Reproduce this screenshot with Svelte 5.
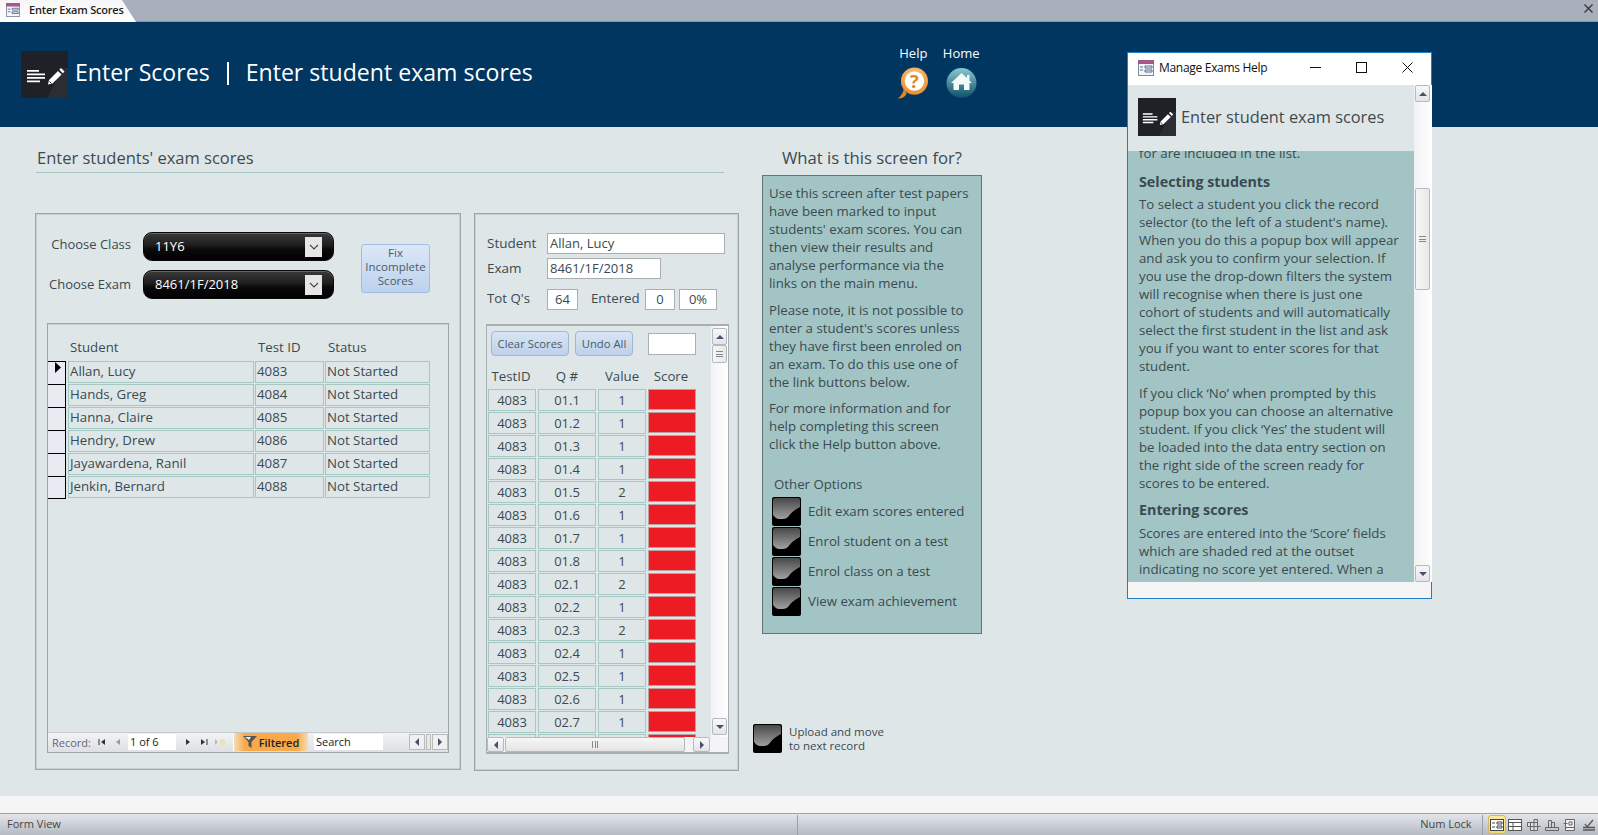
<script>
  const students = [
    ['Allan, Lucy', 4083], ['Hands, Greg', 4084], ['Hanna, Claire', 4085],
    ['Hendry, Drew', 4086], ['Jayawardena, Ranil', 4087], ['Jenkin, Bernard', 4088]
  ];
  const qs = [
    ['01.1',1],['01.2',1],['01.3',1],['01.4',1],['01.5',2],['01.6',1],['01.7',1],['01.8',1],
    ['02.1',2],['02.2',1],['02.3',2],['02.4',1],['02.5',1],['02.6',1],['02.7',1]
  ];
  const options = ['Edit exam scores entered','Enrol student on a test','Enrol class on a test','View exam achievement'];
</script>

{#snippet formIcon(size)}
  <svg width={size} height={size} viewBox="0 0 16 16" class="noshrink">
    <rect x="0.5" y="0.5" width="15" height="15" fill="#f4f5f8" stroke="#7f8aa0"/>
    <rect x="0.5" y="0.5" width="15" height="3" fill="#b0568a" stroke="#9a5a86"/>
    <path d="M2 7h3M2 10h3M7 6h7v2H7zM7 10h7v2H7z" fill="none" stroke="#5a6a90"/>
  </svg>
{/snippet}

{#snippet penIcon(w, h)}
  <svg width={w} height={h} viewBox="0 0 47 47" class="noshrink">
    <rect width="47" height="47" fill="#1f2126"/>
    <path d="M26 47L42 17 47 17V47Z" fill="#2a2d33"/>
    <path d="M6 19h12v1.700H6zM6 22.500h18v1.700H6zM6 26h18v1.700H6zM6 29.500h13v1.700H6z" fill="#fff"/>
    <path d="M37 20l3.500 3.500-9 9-4.500 1 1-4.500zM38.300 18.700l1.700-1.700 3.500 3.500-1.700 1.700z" fill="#fff"/>
    <path d="M28.500 30.500l2 2" stroke="#1f2126" stroke-width="1"/>
  </svg>
{/snippet}

{#snippet glossy()}
  <svg width="29" height="29" viewBox="0 0 29 29" class="noshrink">
    <defs>
      <linearGradient id="gl" x1="0" y1="0" x2="0" y2="1">
        <stop offset="0" stop-color="#484848"/><stop offset="1" stop-color="#a0a0a0"/>
      </linearGradient>
    </defs>
    <rect width="29" height="29" rx="2" fill="#000"/>
    <path d="M1 3q0-2 2-2h23q2 0 2 2v7q-8 4-12 10-2 2-5 2H7q-3 0-6-4z" fill="url(#gl)"/>
  </svg>
{/snippet}

{#snippet arrow(d)}
  <svg width="10" height="10" viewBox="0 0 10 10">
    {#if d === 'up'}<path d="M1 7L5 3L9 7Z" fill="#47506f"/>
    {:else if d === 'down'}<path d="M1 3L5 7L9 3Z" fill="#47506f"/>
    {:else if d === 'left'}<path d="M7 1L3 5L7 9Z" fill="#47506f"/>
    {:else}<path d="M3 1L7 5L3 9Z" fill="#47506f"/>{/if}
  </svg>
{/snippet}

<div class="app">
  <div class="tabbar">
    <div class="tab">
      {@render formIcon(14)}
      <span>Enter Exam Scores</span>
    </div>
    <svg class="closex" width="9" height="9" viewBox="0 0 9 9"><path d="M0.5 0.5L8.500 8.500M8.500 0.500L0.500 8.500" stroke="#333" stroke-width="1.200"/></svg>
  </div>

  <header class="banner">
    {@render penIcon(47, 47)}
    <h1>Enter Scores</h1>
    <i class="bar"></i>
    <h1 class="sub">Enter student exam scores</h1>
    <div class="links">
      <div class="link">
        <span>Help</span>
        <svg width="31" height="32" viewBox="0 0 32 32">
          <defs><radialGradient id="ho" cx="0.5" cy="0.3" r="0.8"><stop offset="0" stop-color="#fbc98a"/><stop offset="1" stop-color="#e8851f"/></radialGradient></defs>
          <circle cx="17" cy="14" r="14" fill="url(#ho)"/>
          <path d="M0 32q6 0 9-5l-3-6q0 6-6 11z" fill="#e8851f"/>
          <circle cx="17" cy="14" r="10" fill="#fff"/>
          <text x="17" y="21" text-anchor="middle" class="qm">?</text>
        </svg>
      </div>
      <div class="link">
        <span>Home</span>
        <svg width="31" height="32" viewBox="0 0 31 32">
          <defs><linearGradient id="hh" x1="0" y1="0" x2="0" y2="1"><stop offset="0" stop-color="#8cc8d2"/><stop offset="1" stop-color="#0c5068"/></linearGradient></defs>
          <circle cx="15.500" cy="16" r="15" fill="url(#hh)"/>
          <path d="M15.500 6L21 11V8h2.500v5.500L26 16h-2.500v7H18v-5.500h-5V23H7.500v-7H5Z" fill="#f2fafa"/>
        </svg>
      </div>
    </div>
  </header>

  <main class="main">
    <section class="work">
      <h2 class="heading">Enter students' exam scores</h2>
      <div class="panels">
        <div class="panel left">
          <div class="filters">
            <div class="combos">
              <div class="frow"><label class="up6">Choose Class</label><div class="combo"><span>11Y6</span><b><svg width="10" height="6" viewBox="0 0 10 6"><path d="M1 1l4 4 4-4" fill="none" stroke="#444" stroke-width="1.100"/></svg></b></div></div>
              <div class="frow"><label class="up2">Choose Exam</label><div class="combo"><span>8461/1F/2018</span><b><svg width="10" height="6" viewBox="0 0 10 6"><path d="M1 1l4 4 4-4" fill="none" stroke="#444" stroke-width="1.100"/></svg></b></div></div>
            </div>
            <button class="fix">Fix<br>Incomplete<br>Scores</button>
          </div>
          <div class="subform">
            <div class="lhead"><span>Student</span><span>Test ID</span><span>Status</span></div>
            <div class="list">
              {#each students as [name, id], i}
                <div class="lrow">
                  <div class="sel">{#if i === 0}<svg width="8" height="11" viewBox="0 0 8 11"><path d="M1 0L7 5.500L1 11Z" fill="#000"/></svg>{/if}</div>
                  <div class="cell c1">{name}</div>
                  <div class="cell c2">{id}</div>
                  <div class="cell c3">Not Started</div>
                </div>
              {/each}
            </div>
            <div class="nav">
              <span class="rec">Record:</span>
              <span class="nb">
                <svg width="8" height="8" viewBox="0 0 8 8"><path d="M1 1v6" stroke="#333"/><path d="M7 1L3 4l4 3z" fill="#333"/></svg>
              </span>
              <span class="nb dim"><svg width="8" height="8" viewBox="0 0 8 8"><path d="M6 1L2 4l4 3z" fill="#999"/></svg></span>
              <span class="navbox pos">1 of 6</span>
              <span class="nb first"><svg width="8" height="8" viewBox="0 0 8 8"><path d="M2 1l4 3-4 3z" fill="#333"/></svg></span>
              <span class="nb"><svg width="8" height="8" viewBox="0 0 8 8"><path d="M1 1l4 3-4 3z" fill="#333"/><path d="M7 1v6" stroke="#333"/></svg></span>
              <span class="nb dim"><svg width="12" height="8" viewBox="0 0 12 8"><path d="M1 1l3 3-3 3z" fill="#bbb"/><rect x="6" y="1" width="5" height="6" fill="#e9e2b5"/></svg></span>
              <span class="filtered">
                <svg width="14" height="12" viewBox="0 0 14 12"><path d="M0 0h14L8.500 6v6l-3-2V6z" fill="#555"/><path d="M2 1h6L6 4z" fill="#eee"/></svg>
                Filtered
              </span>
              <span class="navbox search">Search</span>
              <span class="hs">
                <span class="hb">{@render arrow('left')}</span><i></i><span class="hb">{@render arrow('right')}</span>
              </span>
            </div>
          </div>
        </div>

        <div class="panel right">
          <div class="frow2"><label>Student</label><div class="tb w178">Allan, Lucy</div></div>
          <div class="frow2 f2"><label>Exam</label><div class="tb w114">8461/1F/2018</div></div>
          <div class="frow3">
            <label>Tot Q's</label><div class="tb cen w31">64</div>
            <label class="ent">Entered</label><div class="tb cen w30">0</div><div class="tb cen w38">0%</div>
          </div>
          <div class="scorebox">
            <div class="scoremain">
              <div class="sbody">
                <div class="btns">
                  <button class="ghost b1">Clear Scores</button>
                  <button class="ghost b2">Undo All</button>
                  <div class="tb blank"></div>
                </div>
                <div class="shead"><span>TestID</span><span>Q #</span><span>Value</span><span>Score</span></div>
                <div class="srows">
                  {#each qs as [q, v]}
                    <div class="srow">
                      <div class="sc">4083</div><div class="sc">{q}</div><div class="sc">{v}</div><div class="red"></div>
                    </div>
                  {/each}
                  <div class="srow">
                    <div class="sc"></div><div class="sc"></div><div class="sc"></div><div class="red"></div>
                  </div>
                </div>
              </div>
              <div class="vscroll">
                <span class="sb">{@render arrow('up')}</span>
                <span class="thumb small"><i></i></span>
                <span class="grow"></span>
                <span class="sb">{@render arrow('down')}</span>
              </div>
            </div>
            <div class="hscroll">
              <span class="sb">{@render arrow('left')}</span>
              <span class="hthumb"><i></i></span>
              <span class="sb">{@render arrow('right')}</span>
            </div>
          </div>
        </div>
      </div>
    </section>

    <aside class="about">
      <h3>What is this screen for?</h3>
      <div class="helpbox">
        <p>Use this screen after test papers<br>have been marked to input<br>students' exam scores.  You can<br>then view their results and<br>analyse performance via the<br>links on the main menu.</p>
        <p>Please note, it is not possible to<br>enter a student's scores unless<br>they have first been enroled on<br>an exam.  To do this use one of<br>the link buttons below.</p>
        <p>For more information and for<br>help completing this screen<br>click the Help button above.</p>
        <div class="oo">Other Options</div>
        <div class="opts">
          {#each options as o}
            <div class="opt">{@render glossy()}<span>{o}</span></div>
          {/each}
        </div>
      </div>
      <div class="upload">{@render glossy()}<span>Upload and move<br>to next record</span></div>
    </aside>
  </main>

  <div class="strip"></div>
  <footer class="status">
    <span class="fv">Form View</span>
    <i class="vsep"></i>
    <span class="spring"></span>
    <span class="nl">Num Lock</span>
    <i class="vsep two"></i>
    <span class="view on"><svg width="14" height="12" viewBox="0 0 14 12"><rect x=".5" y=".5" width="13" height="11" fill="#fff" stroke="#444"/><path d="M2 4h3M2 8h3M7 3h5v2H7zM7 7h5v2H7z" fill="none" stroke="#444"/></svg></span>
    <span class="view"><svg width="14" height="12" viewBox="0 0 14 12"><rect x=".5" y=".5" width="13" height="11" fill="#fff" stroke="#555"/><path d="M.5 3.500h13M5 3.500v8M.5 7.500h13" stroke="#555"/></svg></span>
    <span class="view"><svg width="14" height="12" viewBox="0 0 14 12"><path d="M3.500 3.500h7v8h-7zM3.500 7.500h10M7 3.500v8M.5 3.500h3v4h-3zM7 .5h3.500v3H7z" fill="#ddd" stroke="#666"/></svg></span>
    <span class="view"><svg width="14" height="12" viewBox="0 0 14 12"><path d="M3.500 8.500V1.500h3v7M6.500 8.500V3.500h3v5M.5 8.500h13v3H.5z" fill="none" stroke="#666"/></svg></span>
    <span class="view"><svg width="14" height="12" viewBox="0 0 14 12"><path d="M2.500 .5h9v11h-9zM.5 4.500h4M2.500 8.500h9M6 3h3v3H6z" fill="#eee" stroke="#666"/></svg></span>
    <span class="view"><svg width="14" height="12" viewBox="0 0 14 12"><path d="M1 11h12M1 8.500h12M3 5l2 3 6-7" fill="none" stroke="#555" stroke-width="1.300"/></svg></span>
  </footer>

  <div class="popup">
    <div class="ptitle">
      {@render formIcon(16)}
      <span class="pname">Manage Exams Help</span>
      <span class="caps">
        <svg width="11" height="11" viewBox="0 0 11 11"><path d="M0 5.500h11" stroke="#111"/></svg>
        <svg width="11" height="11" viewBox="0 0 11 11"><rect x=".5" y=".5" width="10" height="10" fill="none" stroke="#111"/></svg>
        <svg width="11" height="11" viewBox="0 0 11 11"><path d="M.5 .5l10 10M10.500 .5l-10 10" stroke="#111"/></svg>
      </span>
    </div>
    <div class="pbody">
      <div class="pmain">
        <div class="phead">
          {@render penIcon(38, 38)}
          <span>Enter student exam scores</span>
        </div>
        <div class="ptext">
          <div class="pscroll">
            <p class="lead">for are included in the list.</p>
            <h4>Selecting students</h4>
            <p>To select a student you click the record<br>selector (to the left of a student's name).<br>When you do this a popup box will appear<br>and ask you to confirm your selection.  If<br>you use the drop-down filters the system<br>will recognise when there is just one<br>cohort of students and will automatically<br>select the first student in the list and ask<br>you if you want to enter scores for that<br>student.</p>
            <p>If you click ‘No’ when prompted by this<br>popup box you can choose an alternative<br>student. If you click ‘Yes’ the student will<br>be loaded into the data entry section on<br>the right side of the screen ready for<br>scores to be entered.</p>
            <h4 class="e2">Entering scores</h4>
            <p>Scores are entered into the ‘Score’ fields<br>which are shaded red at the outset<br>indicating no score yet entered. When a</p>
          </div>
        </div>
      </div>
      <div class="pvscroll">
        <span class="sb">{@render arrow('up')}</span>
        <span class="gap1"></span>
        <span class="thumb big"><i></i></span>
        <span class="grow"></span>
        <span class="sb">{@render arrow('down')}</span>
      </div>
    </div>
    <div class="pfoot"></div>
  </div>
</div>

<style>
  :global(body) { margin: 0; background: #dfe6e8; }
  :global(*) { box-sizing: border-box; }
  .noshrink { flex: none; display: block; }
  .app {
    position: relative; width: 1598px; height: 835px; overflow: hidden;
    display: flex; flex-direction: column;
    font-family: "Open Sans", "Noto Sans", sans-serif; color: #3a4a50; font-size: 13.250px;
    background: #dfe6e8;
  }
  .tabbar { height: 22px; flex: none; background: linear-gradient(#aab0bc, #a7aebb); display: flex; align-items: stretch; border-bottom: 1px solid #8d939d; position: relative; }
  .tab {
    width: 136px; height: 22px; display: flex; align-items: center; gap: 9px; padding: 0 0 3px 6px;
    background: linear-gradient(#f6f6f6, #ffffff);
    clip-path: polygon(0 0, 122px 0, 136px 100%, 0 100%);
    font-size: 11px; color: #222; letter-spacing: -0.2px; font-weight: 600;
  }
  .closex { position: absolute; right: 5px; top: 4px; }

  .banner { height: 105px; flex: none; background: #003660; display: flex; align-items: center; padding: 0 0 0 21px; color: #fff; }
  h1 { margin: 0 0 5px 7px; font-weight: 400; font-size: 23.100px; }
  h1.sub { margin-left: 17px; }
  .bar { width: 2px; height: 23px; background: #fff; margin: 0 0 3px 17px; }
  .links { margin-left: 365px; display: flex; gap: 14px; margin-top: -6px; }
  .link { display: flex; flex-direction: column; align-items: center; gap: 5px; font-size: 13px; }

  .main { flex: 1; display: flex; padding-left: 35px; min-height: 0; }
  .work { width: 704px; flex: none; }
  .heading { margin: 0 0 40px 1px; width: 688px; height: 46px; padding: 19px 0 0 1px; border-bottom: 1px solid #a5c4c2; font-weight: 400; font-size: 16.500px; line-height: 24px; color: #3f4a4e; }
  .panels { display: flex; gap: 13px; }
  .panel { flex: none; border: 1px solid #9ea5a6; box-shadow: inset 0 0 0 1px #c9d0d1; background: #dfe6e8; }
  .panel.left { width: 426px; height: 557px; padding: 18px 11px 16px 11px; display: flex; flex-direction: column; }
  .filters { display: flex; height: 75px; margin-bottom: 16px; }
  .combos { width: 287px; display: flex; flex-direction: column; gap: 9px; }
  .frow { display: flex; align-items: center; height: 29px; }
  .frow label { width: 84px; text-align: right; margin-right: 12px; font-size: 13px; }
  .up6 { margin-top: -6px; }
  .up2 { margin-top: -2px; }
  .combo { width: 191px; height: 29px; border-radius: 9px; color: #fff; display: flex; align-items: center; justify-content: space-between; padding: 0 11px 0 11px;
    background: linear-gradient(#3a3a3a 0%, #1e1e1e 45%, #0a0a0a 60%, #000 100%); border: 1px solid #0a0a0a; box-shadow: inset 0 1px 0 #666; font-size: 13px; }
  .combo span { margin-top: -2px; }
  .combo b { width: 17px; height: 20px; background: #e6e6e6; display: flex; align-items: center; justify-content: center; }
  .fix { margin: 12px 0 0 27px; width: 69px; height: 49px; border: 1px solid #a2bde0; border-radius: 3px; background: linear-gradient(#dbe7f6, #bcd2ee); color: #4a5a66; font: 11.500px/14px "Open Sans", sans-serif; padding: 0 0 4px; }
  .subform { flex: 1; border: 1px solid #9ea5a6; box-shadow: inset 0 1px 0 #c9d0d1; display: flex; flex-direction: column; }
  .lhead { display: flex; height: 37px; padding-top: 14px; line-height: 18px; }
  .lhead span:nth-child(1) { margin-left: 22px; width: 188px; }
  .lhead span:nth-child(2) { width: 70px; }
  .list { flex: 1; }
  .lrow { display: flex; height: 23px; gap: 1px; }
  .sel { width: 18px; height: 23px; background: #e8ebf2; border-top: 1px solid #000; border-right: 1px solid #000; display: flex; padding: 0 0 0 6px; margin-right: 1px; }
  .lrow:last-child .sel { border-bottom: 1px solid #000; }
  .cell { height: 22px; border: 1px solid #a6c8c4; line-height: 19px; padding-left: 1px; white-space: nowrap; }
  .c1 { width: 186px; } .c2 { width: 69px; } .c3 { width: 105px; }

  .nav { height: 20px; flex: none; display: flex; align-items: center; background: linear-gradient(#f2f3f5, #dde0e4); border-top: 1px solid #c4c8cc; font-size: 11px; color: #444; padding-bottom: 1px; }
  .rec { margin-left: 4px; color: #667; width: 42px; }
  .nb { width: 16px; display: flex; justify-content: center; }
  .navbox { background: #fff; height: 16px; line-height: 15px; padding-left: 2px; color: #222; }
  .pos { width: 48px; margin-left: 2px; }
  .first { margin-left: 4px; }
  .filtered { width: 75px; height: 18px; margin-left: 5px; background: linear-gradient(90deg, #f3ddb7, #f9a949 15%, #f9a949 85%, #f3ddb7); display: flex; align-items: center; justify-content: center; gap: 2px; color: #222; font-weight: 600; border-left: 1px solid #fff; }
  .search { width: 69px; margin-left: 6px; }
  .hs { margin-left: auto; display: flex; align-items: center; gap: 1px; }
  .hs i { width: 5px; height: 16px; background: #e8e8e8; border: 1px solid #bbb; }
  .hb { width: 16px; height: 16px; border: 1px solid #b8bcc2; display: flex; align-items: center; justify-content: center; background: #f0f0f0; }

  .panel.right { width: 265px; height: 558px; padding: 19px 0 0 11px; }
  label { white-space: nowrap; }
  .frow2 { display: flex; align-items: center; height: 21px; font-size: 13.500px; }
  .frow2 label { width: 61px; margin-top: -2px; padding-left: 1px; }
  .f2 { margin-top: 4px; }
  .tb { background: #fff; border: 1px solid #a9aeb0; height: 21px; line-height: 19px; padding-left: 2px; font-size: 13px; white-space: nowrap; }
  .cen { text-align: center; padding: 0; }
  .w178 { width: 178px; } .w114 { width: 114px; } .w31 { width: 31px; } .w30 { width: 30px; margin-left: 4px; } .w38 { width: 38px; margin-left: 4px; }
  .frow3 { display: flex; align-items: center; height: 21px; margin-top: 10px; }
  .frow3 label { width: 61px; margin-top: -3px; padding-left: 1px; }
  .frow3 .ent { width: 50px; margin-left: 13px; padding: 0; }
  .scorebox { width: 243px; height: 430px; margin-top: 14px; border: 2px solid #a9aeb0; border-left-width: 1px; border-right-width: 1px; background: #fff; display: flex; flex-direction: column; }
  .scoremain { flex: 1; min-height: 0; display: flex; }
  .sbody { width: 224px; background: #dfe6e8; flex: none; padding: 5px 0 0 1px; display: flex; flex-direction: column; min-height: 0; }
  .btns { display: flex; align-items: center; height: 25px; }
  .ghost { height: 25px; border: 1px solid #9fb6d6; border-radius: 4px; background: linear-gradient(#d9e5f4, #bdd1ea); color: #4a5a66; font: 11.300px "Open Sans", sans-serif; padding: 0; }
  .b1 { width: 78px; margin-left: 3px; } .b2 { width: 58px; margin-left: 6px; }
  .blank { width: 48px; margin-left: 15px; height: 22px; }
  .shead { display: grid; grid-template-columns: 46px 66px 44px 54px; height: 33px; line-height: 40px; text-align: center; white-space: nowrap; }
  .srows { flex: 1; overflow: hidden; min-height: 0; }
  .srow { display: grid; grid-template-columns: 48px 58px 48px 48px; column-gap: 2px; height: 23px; }
  .sc { height: 22px; border: 1px solid #a6c8c4; text-align: center; line-height: 20px; font-size: 13px; }
  .red { height: 21px; background: #ed1c24; border: 1px solid #bfa0a0; }
  .vscroll { flex: 1; display: flex; flex-direction: column; padding: 2px 1px 2px 1px; background: linear-gradient(90deg, #f2f2f4, #fff); }
  .sb { flex: none; width: 15px; height: 17px; border: 1px solid #b5b9c0; border-radius: 2px; background: linear-gradient(#f8f8f8, #e4e4e8); display: flex; align-items: center; justify-content: center; }
  .thumb { flex: none; width: 15px; border: 1px solid #b5b9c0; border-radius: 2px; background: linear-gradient(90deg, #f6f6f6, #e8e8e8); display: flex; align-items: center; justify-content: center; }
  .thumb i { width: 7px; height: 6px; border-top: 1px solid #888; border-bottom: 1px solid #888; background: linear-gradient(#888,#888) center/100% 1px no-repeat; }
  .small { height: 18px; }
  .big { height: 102px; }
  .gap1 { height: 86px; flex: none; }
  .grow { flex: 1; }
  .hscroll { height: 15px; flex: none; display: flex; align-items: center; background: #f4f4f6; }
  .hscroll .sb { width: 17px; height: 15px; }
  .hscroll .sb:last-child { margin-left: 8px; }
  .hthumb { width: 180px; height: 15px; border: 1px solid #b5b9c0; border-radius: 2px; margin-left: 1px; background: linear-gradient(#f6f6f6, #e4e4e4); display: flex; align-items: center; justify-content: center; }
  .hthumb i { width: 6px; height: 7px; border-left: 1px solid #888; border-right: 1px solid #888; background: linear-gradient(#888,#888) center/1px 100% no-repeat; }

  .about { width: 220px; margin-left: 23px; flex: none; display: flex; flex-direction: column; }
  h3 { margin: 0; font-weight: 400; font-size: 16.700px; height: 48px; padding-top: 19px; line-height: 24px; text-align: center; color: #3a4a50; white-space: nowrap; }
  .helpbox { height: 459px; background: #a3c4c4; border: 1px solid #66757c; padding: 8px 6px; line-height: 18px; white-space: nowrap; }
  .helpbox p { margin: 0 0 8px; }
  .helpbox p:first-child { margin-bottom: 9px; }
  .oo { margin: 22px 0 0 5px; }
  .opts { margin: 3px 0 0 3px; }
  .opt { display: flex; align-items: center; gap: 7px; height: 30px; }
  .upload { display: flex; align-items: center; gap: 7px; margin: 90px 0 0 -9px; font-size: 11.500px; line-height: 14px; white-space: nowrap; }

  .strip { height: 17px; flex: none; background: #f5f5f5; }
  .status { height: 22px; flex: none; display: flex; align-items: center; background: linear-gradient(#e4e6ea, #b4b9c2); border-top: 1px solid #a0a2a6; font-size: 11px; color: #444; }
  .fv { margin-left: 7px; width: 790px; padding-bottom: 2px; }
  .vsep { width: 1px; height: 20px; background: #9a9ea6; }
  .spring { flex: 1; }
  .nl { margin-right: 10px; padding-bottom: 2px; }
  .two { margin-right: 5px; }
  .view { width: 18.400px; height: 19px; display: flex; align-items: center; justify-content: center; border-radius: 3px; flex: none; }
  .view.on { background: linear-gradient(#fdeb9e, #fbd368); border: 1px solid #d8b45a; }

  .popup { position: absolute; left: 1127px; top: 52px; width: 305px; height: 547px; background: #f5f5f5; border: 1px solid #1f7fc4; display: flex; flex-direction: column; }
  .ptitle { height: 32px; flex: none; background: #fff; display: flex; align-items: center; padding: 0 0 3px 10px; font-size: 12px; color: #111; letter-spacing: -0.300px; }
  .pname { margin-left: 5px; }
  .caps { margin-left: auto; display: flex; gap: 35px; padding-right: 18px; }
  .pbody { height: 497px; flex: none; display: flex; }
  .pmain { width: 286px; flex: none; display: flex; flex-direction: column; }
  .phead { height: 66px; flex: none; background: #dfe6e8; display: flex; align-items: center; padding: 0 0 3px 10px; gap: 5px; font-size: 16.350px; color: #3f4a4e; }
  .ptext { flex: 1; min-height: 0; overflow: hidden; background: #a3c4c4; padding: 0 11px; line-height: 18px; white-space: nowrap; }
  .pscroll { margin-top: -7px; }
  .pscroll p { margin: 0 0 9px; }
  .pscroll .lead { margin-bottom: 11px; }
  .pscroll h4 { margin: 0 0 3.500px; font-size: 14.300px; font-weight: 700; }
  .pscroll h4.e2 { margin-bottom: 5.500px; }
  .pvscroll { flex: 1; display: flex; flex-direction: column; padding: 0 2px 0 1px; background: linear-gradient(90deg, #f2f2f4, #fff); }
  .pfoot { flex: 1; background: #f5f5f5; }
  .qm { font: 700 19px "Open Sans", sans-serif; fill: #e8851f; }
</style>
